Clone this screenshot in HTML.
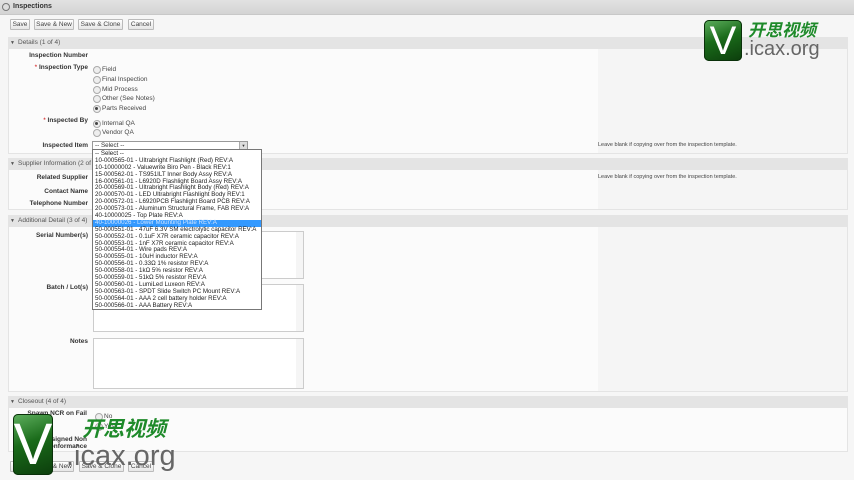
<!DOCTYPE html>
<html><head><meta charset="utf-8"><style>
*{margin:0;padding:0;box-sizing:border-box}
body{width:854px;height:480px;overflow:hidden;background:#f6f6f6;font-family:"Liberation Sans",Arial,sans-serif;font-size:6.5px;color:#333;position:relative}
.a{position:absolute}
.top{left:0;top:0;width:854px;height:15px;background:linear-gradient(#e2e2e2,#d4d4d4);border-bottom:1px solid #c8c8c8}
.btn{position:absolute;height:11px;border:1px solid #bbb;background:linear-gradient(#fff,#e6e6e6);font-size:6.5px;line-height:9px;text-align:center;color:#444;border-radius:1px}
.sec{position:absolute;left:8px;width:840px;background:#fbfbfb;border:1px solid #e4e4e4}
.hdr{position:absolute;left:8px;width:840px;height:12px;background:#e4e4e4;font-size:6.5px;line-height:12px;color:#555;padding-left:10px}
.hdr:before{content:"▼";position:absolute;left:2px;font-size:5px;color:#555}
.lbl{position:absolute;font-weight:bold;color:#333;text-align:right;font-size:6.5px}
.req:before{content:"* ";color:#c00;font-weight:normal}
.rad{position:absolute;font-size:6.5px;line-height:7px;color:#444;padding-left:9px}
.rad:before{content:"";position:absolute;left:0;top:0;width:6px;height:6px;border:1px solid #aaa;border-radius:50%;background:#eee}
.rad.on:after{content:"";position:absolute;left:2px;top:2px;width:3px;height:3px;border-radius:50%;background:#444}
.ta{position:absolute;left:93px;width:211px;background:#fff;border:1px solid #ccc}
.ta:after{content:"";position:absolute;right:0;top:0;width:7px;height:100%;background:#f5f5f5}
.dd{left:92px;top:149px;width:170px;height:161px;background:#fff;border:1px solid #777;font-size:6.2px;color:#222;padding-top:1px;overflow:hidden}
.dd div{padding-left:2px;white-space:nowrap;height:6.9px;line-height:6.9px}
.dd .hl{background:#3399ff;color:#cfe4ff}
.right{left:598px;background:#f5f5f5}
.note{font-size:5.5px;color:#444}
.lg{background:linear-gradient(160deg,#5fb05f,#1a6b1a 45%,#0c3d0c);border-radius:5px;color:#fff;font-weight:bold;text-align:center;box-shadow:inset 0 0 0 1px #0a300a}
.cn{font-family:"Noto Sans CJK SC","WenQuanYi Zen Hei",sans-serif;font-weight:bold;font-style:italic;color:#1e8a2a}
.ic{color:#666;font-family:"Liberation Sans",sans-serif}
</style></head><body>
<div class="a top"></div>
<div class="a" style="left:2px;top:3px;width:8px;height:8px;border-radius:50%;border:1px solid #777;background:#ddd"></div>
<div class="a" style="left:13px;top:3px;font-weight:bold;font-size:7px;color:#333">Inspections</div>

<div class="btn" style="left:10px;top:19px;width:20px">Save</div>
<div class="btn" style="left:34px;top:19px;width:40px">Save &amp; New</div>
<div class="btn" style="left:78px;top:19px;width:45px">Save &amp; Clone</div>
<div class="btn" style="left:128px;top:19px;width:26px">Cancel</div>

<div class="sec" style="top:37px;height:117px"></div>
<div class="a right" style="top:49px;width:249px;height:104px"></div>
<div class="hdr" style="top:37px">Details (1 of 4)</div>
<div class="lbl" style="left:20px;width:68px;top:52px">Inspection Number</div>
<div class="lbl req" style="left:20px;width:68px;top:64px">Inspection Type</div>
<div class="rad" style="left:93px;top:66px">Field</div>
<div class="rad" style="left:93px;top:76px">Final Inspection</div>
<div class="rad" style="left:93px;top:86px">Mid Process</div>
<div class="rad" style="left:93px;top:95px">Other (See Notes)</div>
<div class="rad on" style="left:93px;top:105px">Parts Received</div>
<div class="lbl req" style="left:20px;width:68px;top:117px">Inspected By</div>
<div class="rad on" style="left:93px;top:120px">Internal QA</div>
<div class="rad" style="left:93px;top:129px">Vendor QA</div>
<div class="lbl" style="left:20px;width:68px;top:142px">Inspected Item</div>
<div class="a" style="left:92px;top:141px;width:156px;height:9px;border:1px solid #999;background:#fff;font-size:6.3px;line-height:8px;padding-left:2px">-- Select --<span style="position:absolute;right:0;top:0;width:8px;height:7px;background:#ddd;border-left:1px solid #aaa;font-size:4px;text-align:center">▼</span></div>
<div class="a note" style="left:598px;top:142px">Leave blank if copying over from the inspection template.</div>

<div class="sec" style="top:158px;height:52px"></div>
<div class="a right" style="top:170px;width:249px;height:39px"></div>
<div class="hdr" style="top:158px">Supplier Information (2 of 4)</div>
<div class="lbl" style="left:10px;width:78px;top:174px">Related Supplier</div>
<div class="lbl" style="left:10px;width:78px;top:188px">Contact Name</div>
<div class="lbl" style="left:10px;width:78px;top:200px">Telephone Number</div>
<div class="a note" style="left:598px;top:174px">Leave blank if copying over from the inspection template.</div>

<div class="sec" style="top:215px;height:177px"></div>
<div class="a right" style="top:227px;width:249px;height:164px"></div>
<div class="hdr" style="top:215px">Additional Detail (3 of 4)</div>
<div class="lbl" style="left:10px;width:78px;top:232px">Serial Number(s)</div>
<div class="ta" style="top:231px;height:48px"></div>
<div class="lbl" style="left:10px;width:78px;top:284px">Batch / Lot(s)</div>
<div class="ta" style="top:284px;height:48px"></div>
<div class="lbl" style="left:10px;width:78px;top:338px">Notes</div>
<div class="ta" style="top:338px;height:51px"></div>

<div class="sec" style="top:396px;height:56px"></div>
<div class="hdr" style="top:396px">Closeout (4 of 4)</div>
<div class="lbl" style="left:10px;width:77px;top:410px">Spawn NCR on Fail</div>
<div class="rad" style="left:95px;top:413px">No</div>
<div class="rad" style="left:95px;top:423px">Yes</div>
<div class="lbl" style="left:10px;width:77px;top:436px">Assigned Non<br>Conformance</div>

<div class="btn" style="left:10px;top:461px;width:20px">Save</div>
<div class="btn" style="left:34px;top:461px;width:40px">Save &amp; New</div>
<div class="btn" style="left:79px;top:461px;width:45px">Save &amp; Clone</div>
<div class="btn" style="left:128px;top:461px;width:26px">Cancel</div>

<div class="a dd">
<div>-- Select --</div>
<div>10-000565-01 - Ultrabright Flashlight (Red) REV:A</div>
<div>10-10000002 - Valuewrite Biro Pen - Black REV:1</div>
<div>15-000562-01 - TS951ILT Inner Body Assy REV:A</div>
<div>16-000561-01 - L6920D Flashlight Board Assy REV:A</div>
<div>20-000569-01 - Ultrabright Flashlight Body (Red) REV:A</div>
<div>20-000570-01 - LED Ultrabright Flashlight Body REV:1</div>
<div>20-000572-01 - L6920PCB Flashlight Board PCB REV:A</div>
<div>20-000573-01 - Aluminum Structural Frame, FAB REV:A</div>
<div>40-10000025 - Top Plate REV:A</div>
<div class="hl">40-10000026 - Lower Mounting Plate REV:A</div>
<div>50-000551-01 - 47uF 6.3V SM electrolytic capacitor REV:A</div>
<div>50-000552-01 - 0.1uF X7R ceramic capacitor REV:A</div>
<div>50-000553-01 - 1nF X7R ceramic capacitor REV:A</div>
<div>50-000554-01 - Wire pads REV:A</div>
<div>50-000555-01 - 10uH inductor REV:A</div>
<div>50-000556-01 - 0.33Ω 1% resistor REV:A</div>
<div>50-000558-01 - 1kΩ 5% resistor REV:A</div>
<div>50-000559-01 - 51kΩ 5% resistor REV:A</div>
<div>50-000560-01 - LumiLed Luxeon REV:A</div>
<div>50-000563-01 - SPDT Slide Switch PC Mount REV:A</div>
<div>50-000564-01 - AAA 2 cell battery holder REV:A</div>
<div>50-000566-01 - AAA Battery REV:A</div>
</div>

<div class="a lg" style="left:704px;top:20px;width:38px;height:41px;font-size:40px;line-height:42px;font-family:'Liberation Sans',sans-serif;font-weight:normal">V</div>
<div class="a cn" style="left:748px;top:18px;font-size:17px;line-height:22px">开思视频</div>
<div class="a ic" style="left:744px;top:38px;font-size:20px;line-height:22px">.icax.org</div>

<div class="a lg" style="left:13px;top:414px;width:40px;height:61px;font-size:58px;line-height:62px;font-family:'Liberation Sans',sans-serif;font-weight:normal">V</div>
<div class="a cn" style="left:82px;top:415px;font-size:21px;line-height:26px">开思视频</div>
<div class="a ic" style="left:66px;top:439px;font-size:29px;line-height:34px">.icax.org</div>
</body></html>
